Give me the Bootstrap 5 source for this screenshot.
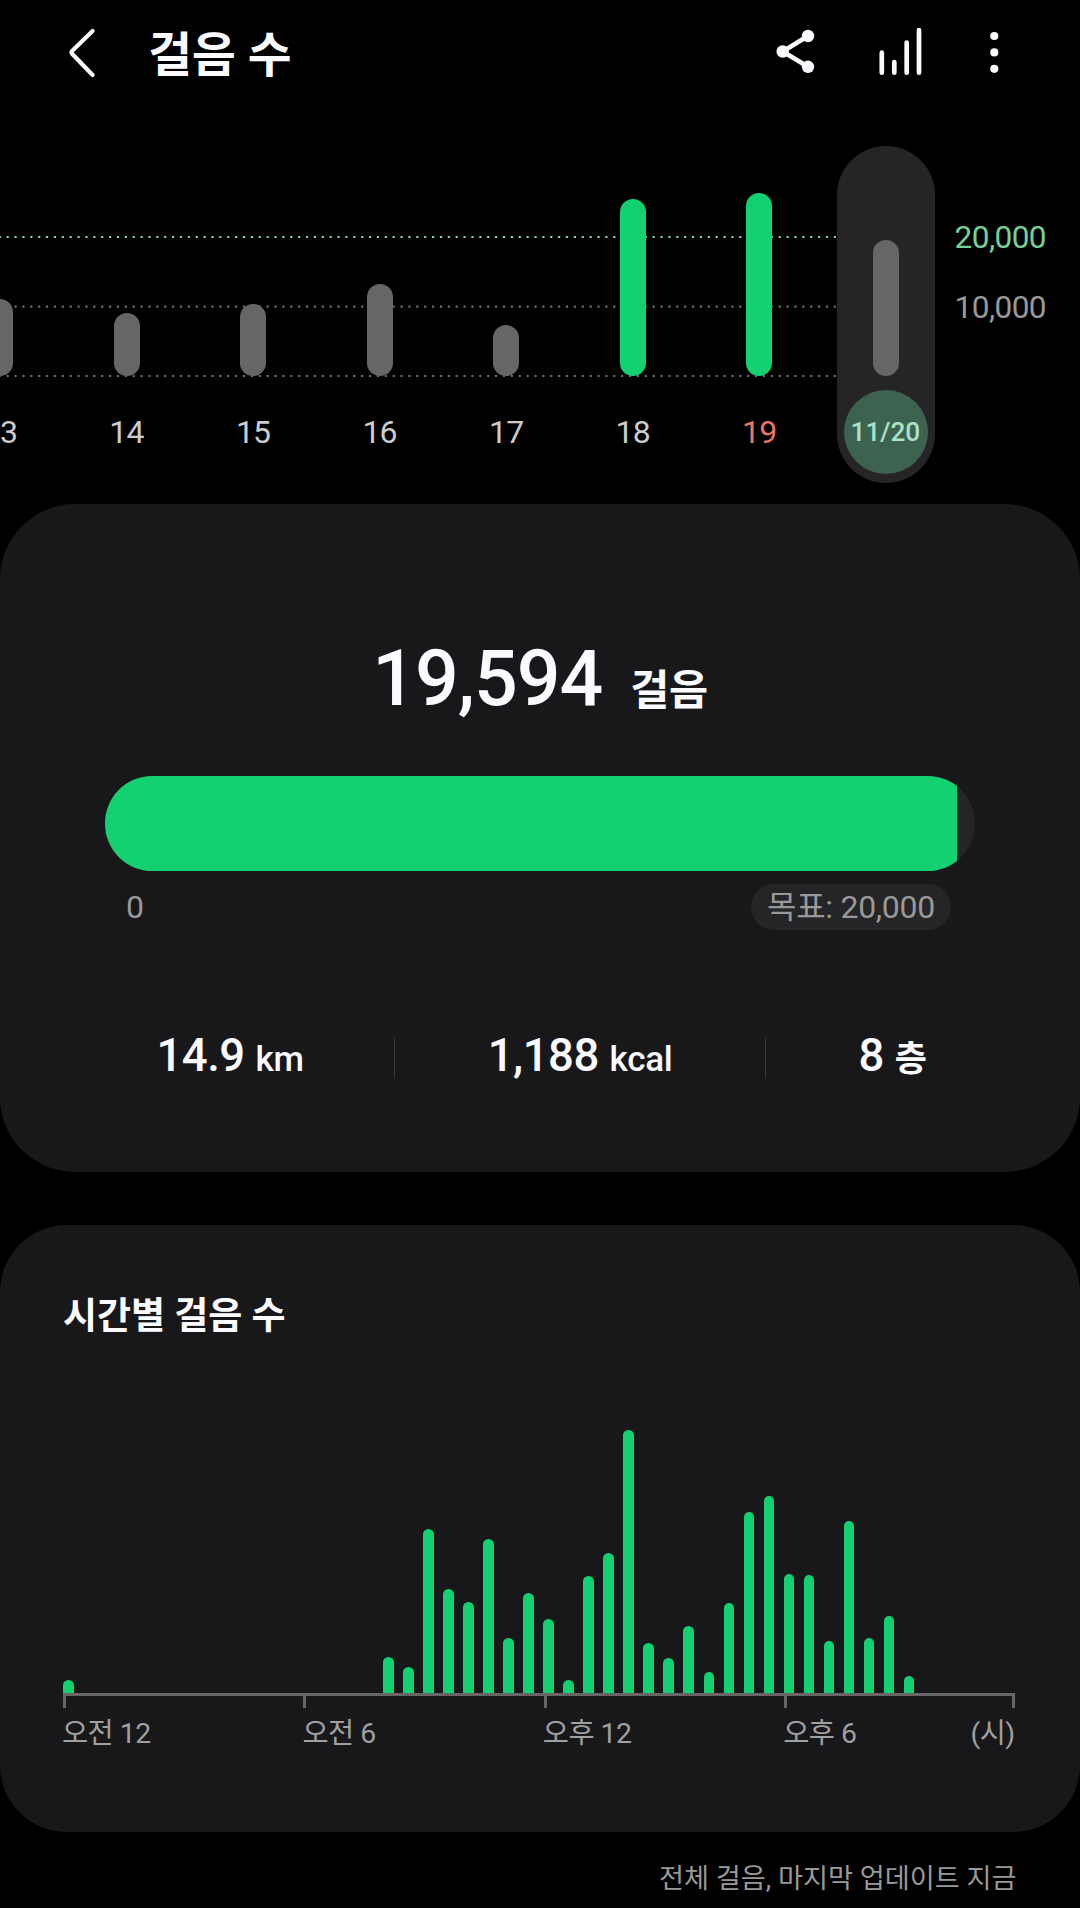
<!DOCTYPE html>
<html lang="ko">
<head>
<meta charset="utf-8">
<meta name="viewport" content="width=device-width, initial-scale=1">
<title>걸음 수</title>
<link href="https://cdn.jsdelivr.net/npm/bootstrap@5.3.0/dist/css/bootstrap.min.css" rel="stylesheet">
<style>
  body { background:#000; color:#fbfaff; font-family:Roboto,"Noto Sans CJK KR",sans-serif; height:1908px; overflow:hidden; }
  .topbar { height:130px; padding:26px 66px 0 66px; }
  .topbar h1 { font-size:47.6px; line-height:60px; font-weight:700; margin-left:50.3px; }
  .topbar svg { display:block; }
  .trend { height:374px; }
  .track { width:836.8px; }
  .track .days { margin-left:-63.3px; }
  .day { width:126.56px; }
  .plot { height:246px; }
  .stick { width:26px; border-radius:13px; background:#666; }
  .stick.done { background:#13d170; }
  .day-label { margin-top:36px; font-size:32px; letter-spacing:-.8px; line-height:41px; color:#ccc; }
  .day-label.holiday { color:#ea766b; }
  .today { width:98.2px; height:337.4px; margin-top:15.7px; border-radius:49.1px; background:#252527; }
  .today .plot { height:230.3px; }
  .today-label { width:84px; height:84px; margin-top:14px; padding:2px 1px 0 0; background:#3d6350; color:#abe2c9; font-size:26.2px; font-weight:500; }
  .scale { padding:88px 34px 0 0; gap:30px; font-size:31.6px; letter-spacing:-.6px; line-height:40px; color:#999; }
  .scale .goal { color:#76cf97; }
  .panel { background:#18181a; }
  .summary { height:667.7px; border-radius:75px; padding-top:130px; margin-bottom:53.3px; }
  .total { height:90px; font-size:77px; line-height:90px; font-weight:500; letter-spacing:-1px; }
  .total .unit { font-size:42.5px; font-weight:700; margin-left:28px; letter-spacing:-.3px; }
  .goal-bar { height:94.7px; margin:52px 105px 0; border-radius:47.3px; background:#252527; }
  .goal-bar .progress-bar { background:#13d170; }
  .goal-row { margin:13.3px 129px 0 126px; font-size:32px; letter-spacing:-.3px; line-height:46px; color:#999; }
  .goal-chip { width:200px; background:#252527; border-radius:23px; }
  .stats { margin-top:108px; padding-left:66px; height:40px; font-weight:500; font-size:45.5px; letter-spacing:-.5px; line-height:36px; }
  .stats .unit { font-size:35px; letter-spacing:-.3px; }
  .stats .hangul { font-weight:700; }
  .stats > div + div { border-left:1px solid #38383a; }
  .s-a { width:328px; } .s-b { width:371px; } .s-c { width:254px; }
  .hourly { height:606.7px; border-radius:67px; padding:67px 65.2px 0 63px; }
  .hourly h2 { font-size:37px; line-height:50px; font-weight:700; }
  .hours { height:351.3px; }
  .hours span { width:10.8px; border-radius:5.4px 5.4px 0 0; background:#13d170; }
  .axis { border-top:3px solid #666; font-size:28.4px; letter-spacing:-.5px; line-height:34px; color:#a0a0a2; }
  .seg { width:240.4px; }
  .seg:last-child { width:230.6px; }
  .tick { height:12px; border-left:3px solid #666; margin-bottom:9px; }
  .seg:last-child .tick { border-right:3px solid #666; }
  .seg .caption { margin-left:-1px; }
  .note { font-size:27.2px; line-height:40px; padding:27.5px 63.5px 0 0; color:#999; }
</style>
<script src="https://cdn.jsdelivr.net/npm/bootstrap@5.3.0/dist/js/bootstrap.bundle.min.js"></script>
</head>
<body>
<header class="topbar d-flex align-items-start">
  <svg width="32" height="54" viewBox="66 26 32 54" fill="none" stroke="#fbfaff" stroke-width="4.2" stroke-linecap="round" stroke-linejoin="round"><path d="M92.6 31 72.3 50.8Q70.8 52.4 72.3 54L92.6 75"/></svg>
  <h1 class="mb-0">걸음 수</h1>
  <svg class="ms-auto" width="240" height="54" viewBox="774 26 240 54" fill="#fbfaff" stroke="#fbfaff" stroke-linecap="round">
    <path d="M808 36 782.7 51.5 808 66.8" fill="none" stroke-width="4.6"/>
    <g stroke="none"><circle cx="808" cy="36" r="6.2"/><circle cx="782.7" cy="51.5" r="6.2"/><circle cx="808" cy="66.8" r="6.2"/>
    <circle cx="994.3" cy="36" r="4.1"/><circle cx="994.3" cy="52.4" r="4.1"/><circle cx="994.3" cy="68.8" r="4.1"/></g>
    <path d="M881.8 52.7V72.7M894.3 62V72.7M906.7 42.6V72.7M919 30.2V72.7" fill="none" stroke-width="4.7"/>
  </svg>
</header>

<section class="trend d-flex align-items-start">
  <div class="track position-relative overflow-hidden flex-shrink-0">
    <svg class="position-absolute top-0 start-0" width="837" height="260" fill="none" stroke-width="2.2" stroke-dasharray="2.2 5.678" stroke-dashoffset="1.3">
      <path d="M0 107H837" stroke="#8ad3a2"/><path d="M0 176.7H837M0 246H837" stroke="#6c6c6c"/>
    </svg>
    <div class="days d-flex position-relative">
      <div class="day flex-shrink-0 text-center"><div class="plot d-flex align-items-end justify-content-center"><div class="stick" style="height:77px"></div></div><div class="day-label">13</div></div>
      <div class="day flex-shrink-0 text-center"><div class="plot d-flex align-items-end justify-content-center"><div class="stick" style="height:63.3px"></div></div><div class="day-label">14</div></div>
      <div class="day flex-shrink-0 text-center"><div class="plot d-flex align-items-end justify-content-center"><div class="stick" style="height:72px"></div></div><div class="day-label">15</div></div>
      <div class="day flex-shrink-0 text-center"><div class="plot d-flex align-items-end justify-content-center"><div class="stick" style="height:92px"></div></div><div class="day-label">16</div></div>
      <div class="day flex-shrink-0 text-center"><div class="plot d-flex align-items-end justify-content-center"><div class="stick" style="height:51px"></div></div><div class="day-label">17</div></div>
      <div class="day flex-shrink-0 text-center"><div class="plot d-flex align-items-end justify-content-center"><div class="stick done" style="height:177px"></div></div><div class="day-label">18</div></div>
      <div class="day flex-shrink-0 text-center"><div class="plot d-flex align-items-end justify-content-center"><div class="stick done" style="height:183.3px"></div></div><div class="day-label holiday">19</div></div>
    </div>
  </div>
  <div class="today flex-shrink-0 d-flex flex-column align-items-center">
    <div class="plot d-flex align-items-end"><div class="stick" style="height:136.2px"></div></div>
    <div class="today-label rounded-circle d-flex align-items-center justify-content-center">11/20</div>
  </div>
  <div class="scale d-flex flex-column flex-grow-1 text-end"><div class="goal">20,000</div><div>10,000</div></div>
</section>

<main>
  <section class="panel summary">
    <div class="total d-flex align-items-baseline justify-content-center"><span>19,594</span><span class="unit">걸음</span></div>
    <div class="goal-bar progress"><div class="progress-bar" style="width:97.97%"></div></div>
    <div class="goal-row d-flex justify-content-between"><span>0</span><span class="goal-chip text-center">목표: 20,000</span></div>
    <div class="stats d-flex">
      <div class="s-a text-center">14.9 <span class="unit">km</span></div>
      <div class="s-b text-center">1,188 <span class="unit">kcal</span></div>
      <div class="s-c text-center">8 <span class="unit hangul">층</span></div>
    </div>
  </section>

  <section class="panel hourly">
    <h2 class="mb-0">시간별 걸음 수</h2>
    <div class="hours d-flex align-items-end justify-content-between" id="hours"></div>
    <div class="axis d-flex">
      <div class="seg"><div class="tick"></div><div class="caption">오전 12</div></div>
      <div class="seg"><div class="tick"></div><div class="caption">오전 6</div></div>
      <div class="seg"><div class="tick"></div><div class="caption">오후 12</div></div>
      <div class="seg"><div class="tick"></div><div class="caption d-flex justify-content-between"><span>오후 6</span><span>(시)</span></div></div>
    </div>
  </section>
  <div class="note text-end">전체 걸음, 마지막 업데이트 지금</div>
</main>
<script>
  // One bar per half hour, heights in pixels
  const steps = [13.7,0,0,0,0,0,0,0,0,0,0,0,0,0,0,0,36.3,26.3,164.3,104.7,91.3,154,55.7,100.7,
    74,13.7,117,140.7,263,50.3,35.7,67.7,21.7,90.3,181.3,197.3,119.3,118.3,52.7,172.3,55,77.7,17.7,0,0,0,0,0];
  document.getElementById('hours').innerHTML = steps.map(h => `<span style="height:${h}px"></span>`).join('');
</script>
</body>
</html>
